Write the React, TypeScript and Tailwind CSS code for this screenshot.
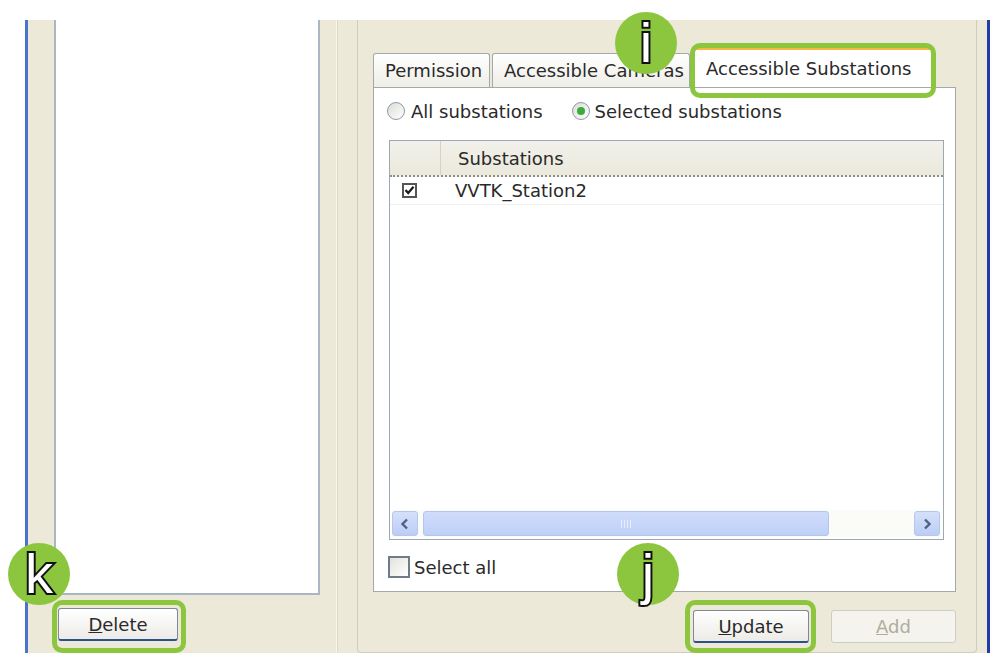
import React from "react";

const FONT = { fontFamily: '"DejaVu Sans", Verdana, sans-serif' };

function Badge({ letter, className }: { letter: string; className: string }) {
  return (
    <div
      className={`absolute w-[62px] h-[62px] rounded-full bg-[#8cc53e] flex items-center justify-center ${className}`}
    >
      <span
        className="text-white text-[56px] leading-none [-webkit-text-stroke:4px_#111] [paint-order:stroke_fill]"
        style={{ fontFamily: '"Liberation Sans", Arial, sans-serif' }}
      >
        {letter}
      </span>
    </div>
  );
}

function Outline({ className }: { className: string }) {
  return (
    <div
      className={`absolute border-[5px] border-[#8cc53e] rounded-[10px] pointer-events-none ${className}`}
    />
  );
}

function XPButton({
  children,
  className,
  disabled,
}: {
  children: React.ReactNode;
  className: string;
  disabled?: boolean;
}) {
  return (
    <div
      className={`h-[33px] rounded-[3px] flex items-center justify-center text-[18px] ${
        disabled
          ? "border border-[#cfcdc1] bg-[#f4f3ee] text-[#b0ad9f]"
          : "border border-[#7d8a99] border-b-[2px] border-b-[#2d4f8a] bg-gradient-to-b from-white to-[#ecebe6] text-[#2a2a2a]"
      } ${className}`}
    >
      {children}
    </div>
  );
}

export default function App() {
  return (
    <div
      className="relative w-[998px] h-[659px] bg-white overflow-hidden pt-[20px] pl-[25px]"
      style={FONT}
    >
      {/* window body */}
      <div className="flex w-[965px] h-[633px] bg-[#ECE9D8] border-l-[3px] border-l-[#4a72cf] border-r-[3px] border-r-[#1f3ca8]">
        {/* left column */}
        <div className="w-[292px] flex flex-col pl-[26px]">
          <div className="w-[266px] h-[575px] bg-white border-l-2 border-r-2 border-b-2 border-[#a9b6c4]" />
          <XPButton className="mt-[13px] ml-[4px] w-[120px]">
            <span>
              <span className="underline">D</span>elete
            </span>
          </XPButton>
        </div>

        {/* separator */}
        <div className="w-[37px] flex">
          <div className="ml-[16px] w-px h-full bg-[#f7f6ef]" />
          <div className="w-px h-full bg-[#dcd9c8]" />
        </div>

        {/* right group box */}
        <div className="w-[620px] h-full border-l border-r border-b border-[#cfcdbf] rounded-b-[4px] pl-[15px] pt-[27px] flex flex-col">
          {/* tabs */}
          <div className="flex items-end h-[40px] text-[18px] text-[#2a2a2a]">
            <div className="w-[117px] h-[34px] rounded-t-[3px] border border-b-0 border-[#a2a9ab] bg-gradient-to-b from-white to-[#eeede6] pl-[11px] flex items-center">
              Permission
            </div>
            <div className="ml-[2px] w-[198px] h-[34px] rounded-t-[3px] border border-b-0 border-[#a2a9ab] bg-gradient-to-b from-white to-[#eeede6] pl-[11px] flex items-center whitespace-nowrap overflow-hidden">
              Accessible Cameras
            </div>
            <div className="ml-[3px] w-[239px] h-[40px] rounded-t-[3px] border border-b-0 border-[#a2a9ab] border-t-[3px] border-t-[#f5b843] bg-white pl-[12px] flex items-center whitespace-nowrap">
              Accessible Substations
            </div>
          </div>

          {/* tab panel */}
          <div className="w-[583px] h-[505px] bg-white border border-[#a2a9ab] flex flex-col text-[18px] text-[#2a2a2a]">
            {/* radios */}
            <div className="mt-[13px] h-[20px] flex items-center pl-[13px]">
              <div className="w-[18px] h-[18px] rounded-full border border-[#8d9aa8] bg-gradient-to-br from-[#dcdcd6] to-white" />
              <span className="ml-[6px]">All substations</span>
              <div className="ml-[29px] w-[18px] h-[18px] rounded-full border border-[#8d9aa8] bg-gradient-to-br from-[#dcdcd6] to-white flex items-center justify-center">
                <div className="w-[8px] h-[8px] rounded-full bg-[#3bab3b]" />
              </div>
              <span className="ml-[5px]">Selected substations</span>
            </div>

            {/* list */}
            <div className="ml-[15px] mt-[19px] w-[555px] h-[400px] border border-[#9aa8b8] flex flex-col bg-white">
              <div className="h-[36px] flex bg-gradient-to-b from-[#f2f1ea] to-[#ebe9dc] border-b-2 border-dotted border-[#8f8f86]">
                <div className="w-[51px] h-full border-r border-[#d6d3c3]" />
                <div className="pl-[17px] flex items-center">Substations</div>
              </div>
              <div className="h-[28px] flex items-center border-b border-[#f0f0f0]">
                <div className="ml-[12px] w-[15px] h-[15px] border-2 border-[#555] bg-white flex items-center justify-center">
                  <svg width="11" height="11" viewBox="0 0 11 11">
                    <path d="M1.5 5 L4.2 8 L9.5 1.8" stroke="#1a1a1a" strokeWidth="2.2" fill="none" />
                  </svg>
                </div>
                <span className="ml-[38px]">VVTK_Station2</span>
              </div>
              <div className="flex-1" />
              {/* horizontal scrollbar */}
              <div className="h-[27px] mb-[2px] mx-[2px] flex items-center bg-[#fbfbf8]">
                <div className="w-[26px] h-[25px] rounded-[3px] bg-gradient-to-b from-[#d5e0fb] to-[#bccdf5] border border-[#b6c7ee] flex items-center justify-center">
                  <svg width="10" height="12" viewBox="0 0 10 12">
                    <path d="M7 1.5 L2.5 6 L7 10.5" stroke="#4d6185" strokeWidth="2.4" fill="none" />
                  </svg>
                </div>
                <div className="ml-[5px] w-[406px] h-[25px] rounded-[3px] bg-gradient-to-b from-[#cfdcfb] to-[#bfd0f7] border border-[#b3c5ee] flex items-center justify-center">
                  <div className="flex gap-[2px]">
                    <div className="w-px h-[8px] bg-[#e8eefc]" />
                    <div className="w-px h-[8px] bg-[#e8eefc]" />
                    <div className="w-px h-[8px] bg-[#e8eefc]" />
                    <div className="w-px h-[8px] bg-[#e8eefc]" />
                  </div>
                </div>
                <div className="flex-1" />
                <div className="w-[26px] h-[25px] rounded-[3px] bg-gradient-to-b from-[#d5e0fb] to-[#bccdf5] border border-[#b6c7ee] flex items-center justify-center mr-[1px]">
                  <svg width="10" height="12" viewBox="0 0 10 12">
                    <path d="M3 1.5 L7.5 6 L3 10.5" stroke="#4d6185" strokeWidth="2.4" fill="none" />
                  </svg>
                </div>
              </div>
            </div>

            {/* select all */}
            <div className="mt-[15px] h-[24px] flex items-center pl-[14px]">
              <div className="w-[22px] h-[22px] border-2 border-[#6f7b88] bg-gradient-to-br from-[#e2e2dc] to-white" />
              <span className="ml-[4px]">Select all</span>
            </div>
          </div>

          {/* buttons */}
          <div className="mt-[18px] flex justify-end pr-[20px]">
            <XPButton className="w-[116px]">
              <span>
                <span className="underline">U</span>pdate
              </span>
            </XPButton>
            <XPButton className="ml-[22px] w-[125px]" disabled>
              <span>
                <span className="underline">A</span>dd
              </span>
            </XPButton>
          </div>
        </div>
      </div>

      {/* annotations */}
      <Outline className="left-[690px] top-[43px] w-[246px] h-[55px]" />
      <Outline className="left-[685px] top-[600px] w-[131px] h-[53px]" />
      <Outline className="left-[52px] top-[600px] w-[134px] h-[53px]" />
      <Badge letter="i" className="left-[615px] top-[12px]" />
      <Badge letter="j" className="left-[617px] top-[543px]" />
      <Badge letter="k" className="left-[8px] top-[543px]" />
    </div>
  );
}
